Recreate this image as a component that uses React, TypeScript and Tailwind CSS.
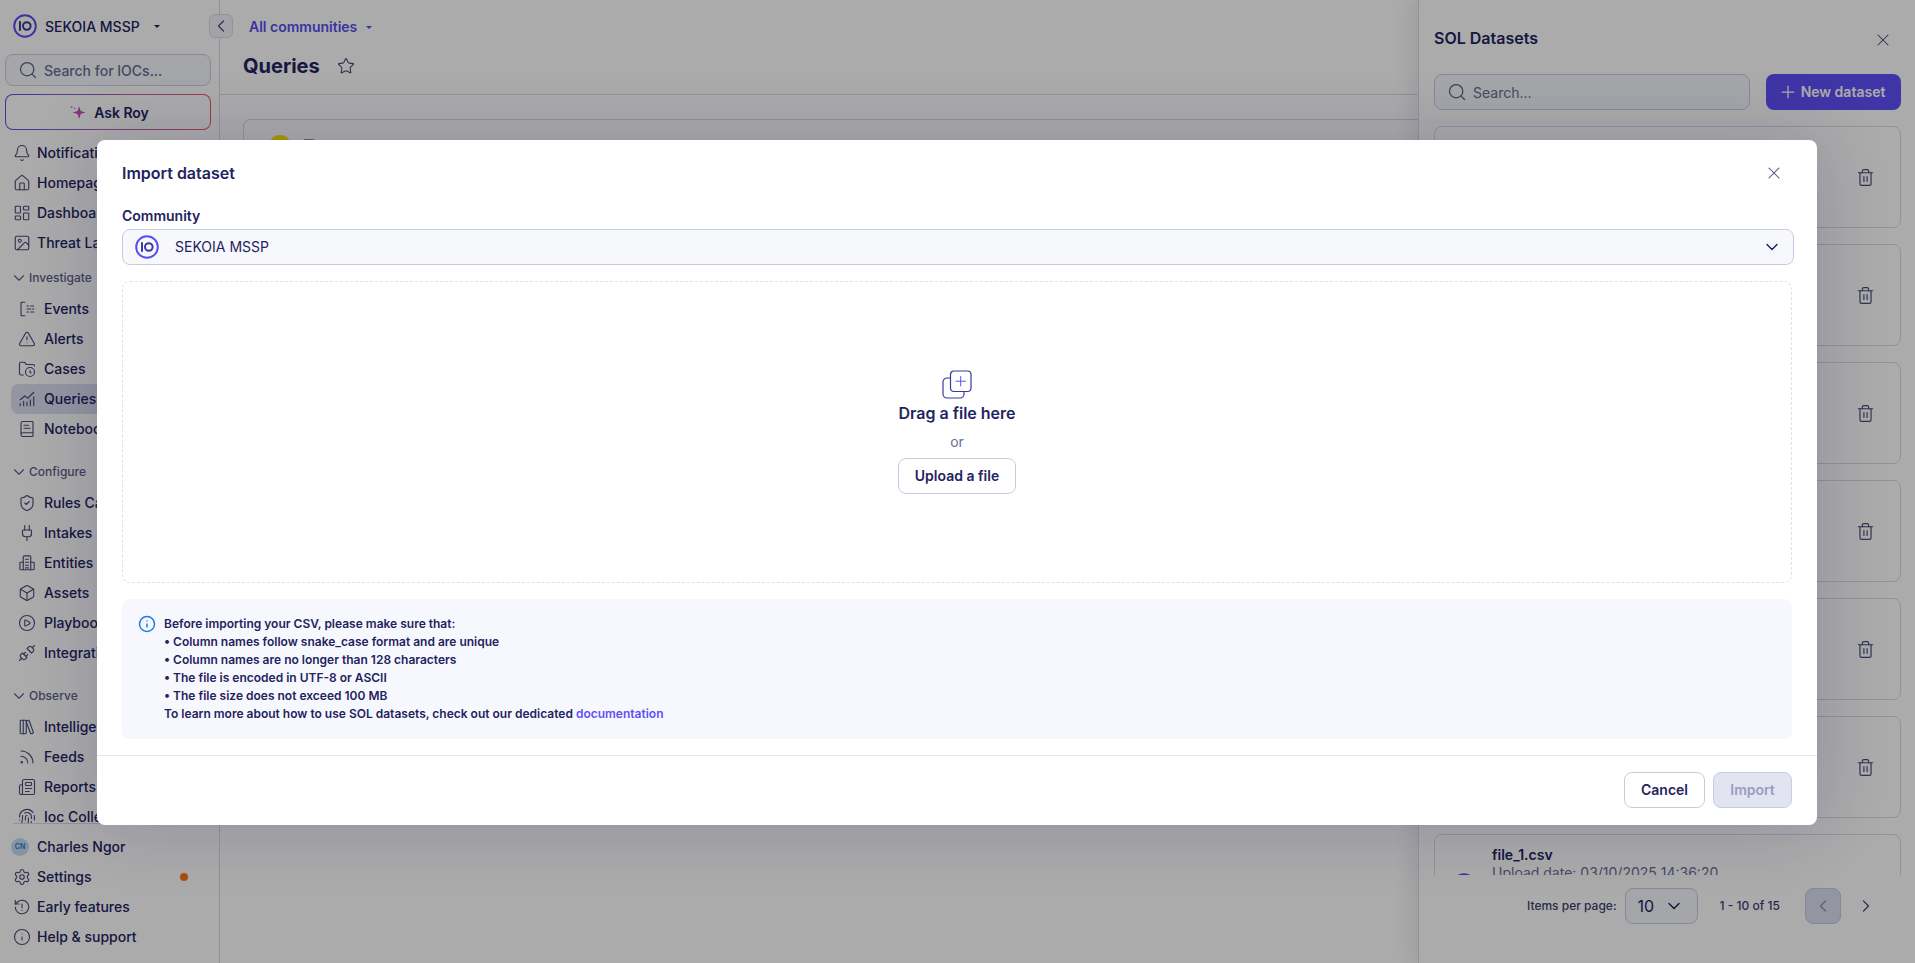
import {
  Bell,
  BookText,
  Box,
  ChevronDown,
  ChevronLeft,
  ChevronRight,
  CirclePlay,
  Fingerprint,
  FolderClock,
  House,
  Image,
  Info,
  LayoutDashboard,
  LibraryBig,
  Newspaper,
  Plug,
  Plus,
  Rss,
  Search,
  Settings,
  ShieldCheck,
  Star,
  Trash2,
  TriangleAlert,
  Unplug,
  X,
} from "lucide-react";
import { ReactNode } from "react";

const iconCls = "w-[18px] h-[18px] text-[#4a4c78] shrink-0";

function Logo({ size = 24 }: { size?: number }) {
  return (
    <svg width={size} height={size} viewBox="0 0 24 24" fill="none" className="shrink-0">
      <circle cx="12" cy="12" r="10.800" stroke="#5b4df0" strokeWidth="2" />
      <rect x="6" y="7.200" width="2" height="9.600" fill="#3c3a9c" />
      <circle cx="13.800" cy="12" r="3.800" stroke="#3c3a9c" strokeWidth="2" />
    </svg>
  );
}

function EventsIcon() {
  return (
    <svg viewBox="0 0 24 24" fill="none" stroke="currentColor" strokeWidth="1.5" strokeLinecap="round" className={iconCls}>
      <path d="M9 3H5a1 1 0 0 0-1 1v16a1 1 0 0 0 1 1h4" />
      <path d="M12 8h2M17 8h4M12 12h5M19.500 12h1.500M12 16h2M17 16h4" />
    </svg>
  );
}

function QueriesIcon() {
  return (
    <svg viewBox="0 0 24 24" fill="none" stroke="currentColor" strokeWidth="1.5" strokeLinecap="round" className={iconCls}>
      <path d="M3 21v-3M7.500 21v-6M12 21v-5M16.500 21v-8M21 21V9" />
      <path d="M3 13l6-5 4 3 8-8" />
    </svg>
  );
}

function EntitiesIcon() {
  return (
    <svg viewBox="0 0 24 24" fill="none" stroke="currentColor" strokeWidth="1.5" strokeLinecap="round" strokeLinejoin="round" className={iconCls}>
      <path d="M7 21V4a1.500 1.500 0 0 1 1.500-1.500h7A1.500 1.500 0 0 1 17 4v17" />
      <path d="M7 11H3.500A1 1 0 0 0 2.500 12v8a1 1 0 0 0 1 1h17a1 1 0 0 0 1-1v-8a1 1 0 0 0-1-1H17" />
      <path d="M10 7h4M10 11h4M10 15h4M10 18.500h4" />
    </svg>
  );
}

function EarlyIcon() {
  return (
    <svg viewBox="0 0 24 24" fill="none" stroke="currentColor" strokeWidth="1.5" strokeLinecap="round" strokeLinejoin="round" className={iconCls}>
      <path d="M3 12a9 9 0 1 0 3-6.700L3 8" />
      <path d="M3 3v5h5" />
      <path d="M12 8v5M12 16.500v.01" />
    </svg>
  );
}

function NavRow({ icon, label, active, sub }: { icon: ReactNode; label: string; active?: boolean; sub?: boolean }) {
  return (
    <div className={`flex h-[30px] items-center rounded-lg ${sub ? "gap-2 pl-[7px] ml-[11px]" : "gap-[6px] pl-[2px] ml-[11px]"} ${active ? "bg-[#dcdeef]" : ""}`}>
      {icon}
      <span className="text-sm font-medium text-[#23235f] whitespace-nowrap">{label}</span>
    </div>
  );
}

function Section({ title, first, children }: { title: string; first?: boolean; children: ReactNode }) {
  return (
    <div className={first ? "mt-[10px]" : "mt-[18px]"}>
      <div className="flex h-5 items-center gap-px pl-[10px] mb-[6px]">
        <ChevronDown className="w-[18px] h-[18px] text-[#5d5f86]" strokeWidth={1.5} />
        <span className="text-xs font-medium text-[#5d5f86]">{title}</span>
      </div>
      {children}
    </div>
  );
}

function Sidebar() {
  return (
    <aside className="relative w-[220px] h-full shrink-0 flex flex-col border-r border-[#d8d9ea]">
      <div className="flex items-center h-6 mt-[14px] ml-[13px] gap-2">
        <Logo />
        <span className="text-sm font-medium text-[#23235f] pt-px">SEKOIA MSSP</span>
        <span className="ml-[6px] w-0 h-0 border-x-[3px] border-x-transparent border-t-[3px] border-t-[#23235f]" />
      </div>
      <div className="absolute left-[209px] top-[14px] w-6 h-6 rounded-md border border-[#d8d9ea] bg-[#f3f4fa] flex items-center justify-center">
        <ChevronLeft className="w-5 h-5 text-[#4a4c78]" strokeWidth={1.5} />
      </div>

      <div className="mt-4 mx-[5px] w-[206px] h-8 rounded-lg border border-[#c9cbe3] bg-[#f7f8fc] flex items-center gap-[6px] pl-3">
        <Search className="w-5 h-5 text-[#5d5f86]" strokeWidth={1.5} />
        <span className="text-sm font-medium text-[#6b6d92] pt-px">Search for IOCs...</span>
      </div>

      <div className="mt-2 mx-[5px] w-[206px] h-[36px] rounded-lg p-px bg-gradient-to-r from-[#5b4df0] to-[#f0506e]">
        <div className="w-full h-full rounded-[7px] bg-white flex items-center justify-center gap-2 pl-[2px]">
          <svg viewBox="0 0 16 16" className="w-[17px] h-[17px]">
            <path d="M9.500 2 11 6.500 15.500 8 11 9.500 9.500 14 8 9.500 3.500 8 8 6.500Z" fill="#c052b4" />
            <circle cx="2.500" cy="2.800" r="0.800" fill="#c052b4" />
            <circle cx="5.400" cy="4" r="0.600" fill="#7a58e0" />
          </svg>
          <span className="text-sm font-semibold text-[#23235f] pt-px">Ask Roy</span>
        </div>
      </div>

      <nav className="mt-2 flex-1 min-h-0 overflow-hidden">
        <NavRow icon={<Bell className={iconCls} strokeWidth={1.5} />} label="Notifications" />
        <NavRow icon={<House className={iconCls} strokeWidth={1.5} />} label="Homepage" />
        <NavRow icon={<LayoutDashboard className={iconCls} strokeWidth={1.5} />} label="Dashboards" />
        <NavRow icon={<Image className={iconCls} strokeWidth={1.5} />} label="Threat Landscape" />
        <Section title="Investigate" first>
          <NavRow sub icon={<EventsIcon />} label="Events" />
          <NavRow sub icon={<TriangleAlert className={iconCls} strokeWidth={1.5} />} label="Alerts" />
          <NavRow sub icon={<FolderClock className={iconCls} strokeWidth={1.5} />} label="Cases" />
          <NavRow sub active icon={<QueriesIcon />} label="Queries" />
          <NavRow sub icon={<BookText className={iconCls} strokeWidth={1.5} />} label="Notebooks" />
        </Section>
        <Section title="Configure">
          <NavRow sub icon={<ShieldCheck className={iconCls} strokeWidth={1.5} />} label="Rules Catalog" />
          <NavRow sub icon={<Plug className={iconCls} strokeWidth={1.5} />} label="Intakes" />
          <NavRow sub icon={<EntitiesIcon />} label="Entities" />
          <NavRow sub icon={<Box className={iconCls} strokeWidth={1.5} />} label="Assets" />
          <NavRow sub icon={<CirclePlay className={iconCls} strokeWidth={1.5} />} label="Playbooks" />
          <NavRow sub icon={<Unplug className={iconCls} strokeWidth={1.5} />} label="Integrations" />
        </Section>
        <Section title="Observe">
          <NavRow sub icon={<LibraryBig className={iconCls} strokeWidth={1.5} />} label="Intelligence" />
          <NavRow sub icon={<Rss className={iconCls} strokeWidth={1.5} />} label="Feeds" />
          <NavRow sub icon={<Newspaper className={iconCls} strokeWidth={1.5} />} label="Reports" />
          <NavRow sub icon={<Fingerprint className={iconCls} strokeWidth={1.5} />} label="Ioc Collections" />
        </Section>
      </nav>

      <div className="mx-[13px] border-t border-[#d8d9ea]" />
      <div className="pt-2 pb-[11px]">
        <div className="flex h-[30px] items-center gap-2 pl-[11px]">
          <span className="w-[18px] h-[18px] rounded-full bg-[#c3dcf5] text-[7px] font-semibold text-[#2f77c5] flex items-center justify-center">CN</span>
          <span className="text-sm font-medium text-[#23235f]">Charles Ngor</span>
        </div>
        <div className="flex h-[30px] items-center">
          <NavRow icon={<Settings className={iconCls} strokeWidth={1.5} />} label="Settings" />
          <span className="ml-auto mr-[31px] w-2 h-2 rounded-full bg-[#f97316]" />
        </div>
        <NavRow icon={<EarlyIcon />} label="Early features" />
        <NavRow icon={<Info className={iconCls} strokeWidth={1.5} />} label="Help & support" />
      </div>
    </aside>
  );
}

function MainArea() {
  return (
    <main className="flex-1 min-w-0 h-full">
      <div className="h-[95px] border-b border-[#d8d9ea] pl-[23px] pt-[15px]">
        <div className="flex items-center gap-[9px] h-6 ml-[6px]">
          <span className="text-sm font-semibold text-[#5b4df0]">All communities</span>
          <span className="w-0 h-0 border-x-[3px] border-x-transparent border-t-[3px] border-t-[#5b4df0]" />
        </div>
        <div className="flex items-center gap-[17px] mt-[13px]">
          <h1 className="text-xl font-bold text-[#23235f] leading-7">Queries</h1>
          <Star className="w-[18px] h-[18px] text-[#4a4c78]" strokeWidth={1.5} />
        </div>
      </div>
      <div className="mt-6 ml-[23px] h-[120px] rounded-tl-lg border border-r-0 border-[#d8d9ea] pl-[25px] pt-[15px] flex items-start gap-[11px]">
        <span className="w-[22px] h-[22px] rounded-full bg-[#fbe700]" />
        <span className="mt-[4px] w-[14px] h-[14px] rounded-sm bg-[#8d8fb0]" />
      </div>
    </main>
  );
}

function DatasetPanel() {
  const rows = [0, 1, 2, 3, 4, 5];
  return (
    <section className="w-[497px] h-full shrink-0 border-l border-[#d8d9ea] shadow-[-8px_0_16px_rgba(20,20,70,0.08)] flex flex-col bg-white">
      <div className="flex items-center justify-between h-[49px] pl-[15px] pr-[22px] pt-[27px]">
        <h2 className="text-base font-semibold text-[#23235f] leading-[22px]">SOL Datasets</h2>
        <X className="w-5 h-5 mt-[3px] text-[#4a4c78]" strokeWidth={1.25} />
      </div>
      <div className="flex gap-4 pl-[15px] pr-[14px] mt-[25px]">
        <div className="flex-1 h-9 rounded-lg border border-[#c9cbe3] bg-[#f7f8fc] flex items-center gap-[6px] pl-3">
          <Search className="w-5 h-5 text-[#5d5f86]" strokeWidth={1.5} />
          <span className="text-sm text-[#6b6d92] pt-px">Search...</span>
        </div>
        <button className="w-[135px] h-9 rounded-lg bg-[#5f4ff8] text-white text-sm font-semibold flex items-center justify-center gap-[3px] pr-[4px]">
          <Plus className="w-5 h-5" strokeWidth={1.5} />
          New dataset
        </button>
      </div>
      <div className="mt-4 pl-[15px] pr-[14px] h-[749px] shrink-0 overflow-hidden flex flex-col gap-4">
        {rows.map((r) => (
          <div key={r} className="h-[102px] shrink-0 rounded-lg border border-[#d8d9ea] flex items-center justify-end pr-[25px]">
            <Trash2 className="w-[19px] h-[19px] text-[#4a4c78]" strokeWidth={1.5} />
          </div>
        ))}
        <div className="h-[102px] shrink-0 rounded-lg border border-[#d8d9ea] flex items-center pl-[17px] gap-[16px]">
          <Logo size={24} />
          <div className="self-start pt-[11px]">
            <div className="text-sm font-semibold text-[#23235f] leading-[18px]">file_1.csv</div>
            <div className="text-sm text-[#6b6d92] leading-[18px]">Upload date: 03/10/2025 14:36:20</div>
          </div>
        </div>
      </div>
      <div className="flex items-center pl-[108px] pt-[13px]">
        <span className="text-xs font-medium text-[#3f4170]">Items per page:</span>
        <div className="ml-2 w-[73px] h-9 rounded-lg border border-[#c9cbe3] bg-[#f7f8fc] flex items-center justify-between pl-3 pr-[13px]">
          <span className="text-base text-[#23235f]">10</span>
          <ChevronDown className="w-5 h-5 text-[#23235f]" strokeWidth={1.75} />
        </div>
        <span className="ml-[22px] text-xs font-medium text-[#3f4170]">1 - 10 of 15</span>
        <div className="ml-[25px] w-9 h-9 rounded-lg border border-[#c9cbe3] bg-[#dcdeef] flex items-center justify-center">
          <ChevronLeft className="w-5 h-5 text-[#8d8fb0]" strokeWidth={1.5} />
        </div>
        <ChevronRight className="ml-[15px] w-5 h-5 text-[#4a4c78]" strokeWidth={1.5} />
      </div>
    </section>
  );
}

function ImportModal() {
  return (
    <div className="ml-[97px] mt-[140px] w-[1720px] h-[685px] rounded-lg bg-white shadow-[0_0_70px_rgba(30,30,90,0.2)] flex flex-col">
      <div className="flex items-center justify-between pl-[25px] pr-[33px] h-[66px]">
        <h2 className="text-base font-semibold text-[#23235f]">Import dataset</h2>
        <X className="w-5 h-5 text-[#4a4c78]" strokeWidth={1.25} />
      </div>
      <div className="flex-1 pl-[25px] pr-[23px] flex flex-col">
        <label className="text-sm font-semibold text-[#23235f] leading-[20px]">Community</label>
        <div className="mt-[3px] h-9 rounded-lg border border-[#c9cbe3] bg-[#f7f8fc] flex items-center pl-3 pr-[11px]">
          <Logo />
          <span className="ml-4 text-sm text-[#23235f]">SEKOIA MSSP</span>
          <ChevronDown className="ml-auto w-5 h-5 text-[#23235f]" strokeWidth={1.75} />
        </div>
        <div className="mt-4 mr-[2px] h-[302px] rounded-lg border border-dashed border-[#dfe0ef] flex flex-col items-center pt-[88px]">
          <svg viewBox="0 0 30 29" fill="none" className="w-[30px] h-[29px]">
            <path d="M8 8H5a4 4 0 0 0-4 4v12a4 4 0 0 0 4 4h13a4 4 0 0 0 4-4v-2" stroke="#3c3a9c" strokeWidth="1.200" strokeLinecap="round" />
            <rect x="8.500" y="1" width="20.500" height="20.500" rx="3.500" stroke="#3c3a9c" strokeWidth="1.200" />
            <path d="M18.700 6.500v9.500M14 11.200h9.500" stroke="#5f4ff8" strokeWidth="1" strokeLinecap="round" />
          </svg>
          <div className="mt-[2px] text-base font-semibold text-[#23235f] leading-6">Drag a file here</div>
          <div className="mt-[7px] text-sm text-[#6b6d92] leading-5">or</div>
          <button className="mt-[6px] w-[118px] h-9 rounded-lg border border-[#c9cbe3] bg-white text-sm font-semibold text-[#23235f]">Upload a file</button>
        </div>
        <div className="mt-4 mr-[2px] h-[140px] rounded-lg bg-[#f7f8fd] flex gap-2 pl-[16px] pt-4">
          <Info className="w-[18px] h-[18px] text-[#1a7fe0] shrink-0" strokeWidth={2} />
          <div className="text-xs font-semibold text-[#23235f] leading-[18px]">
            <div>Before importing your CSV, please make sure that:</div>
            <div>• Column names follow snake_case format and are unique</div>
            <div>• Column names are no longer than 128 characters</div>
            <div>• The file is encoded in UTF-8 or ASCII</div>
            <div>• The file size does not exceed 100 MB</div>
            <div>
              To learn more about how to use SOL datasets, check out our dedicated{" "}
              <span className="text-[#5f4ff8]">documentation</span>
            </div>
          </div>
        </div>
      </div>
      <div className="h-[70px] border-t border-[#e4e4f2] flex items-center justify-end gap-2 pr-[25px] pb-[2px]">
        <button className="w-[81px] h-9 rounded-lg border border-[#c9cbe3] bg-white text-sm font-semibold text-[#23235f]">Cancel</button>
        <button className="w-[79px] h-9 rounded-lg border border-[#c9cbe3] bg-[#e2e4f1] text-sm font-semibold text-[#9a9cc0]">Import</button>
      </div>
    </div>
  );
}

export default function App() {
  return (
    <div className="relative h-[963px] w-[1915px] overflow-hidden bg-white flex font-['Inter',sans-serif]">
      <Sidebar />
      <MainArea />
      <DatasetPanel />
      {/* dimmed backdrop + dialog */}
      <div className="absolute inset-0 bg-[rgba(0,0,0,0.33)]">
        <ImportModal />
      </div>
    </div>
  );
}
